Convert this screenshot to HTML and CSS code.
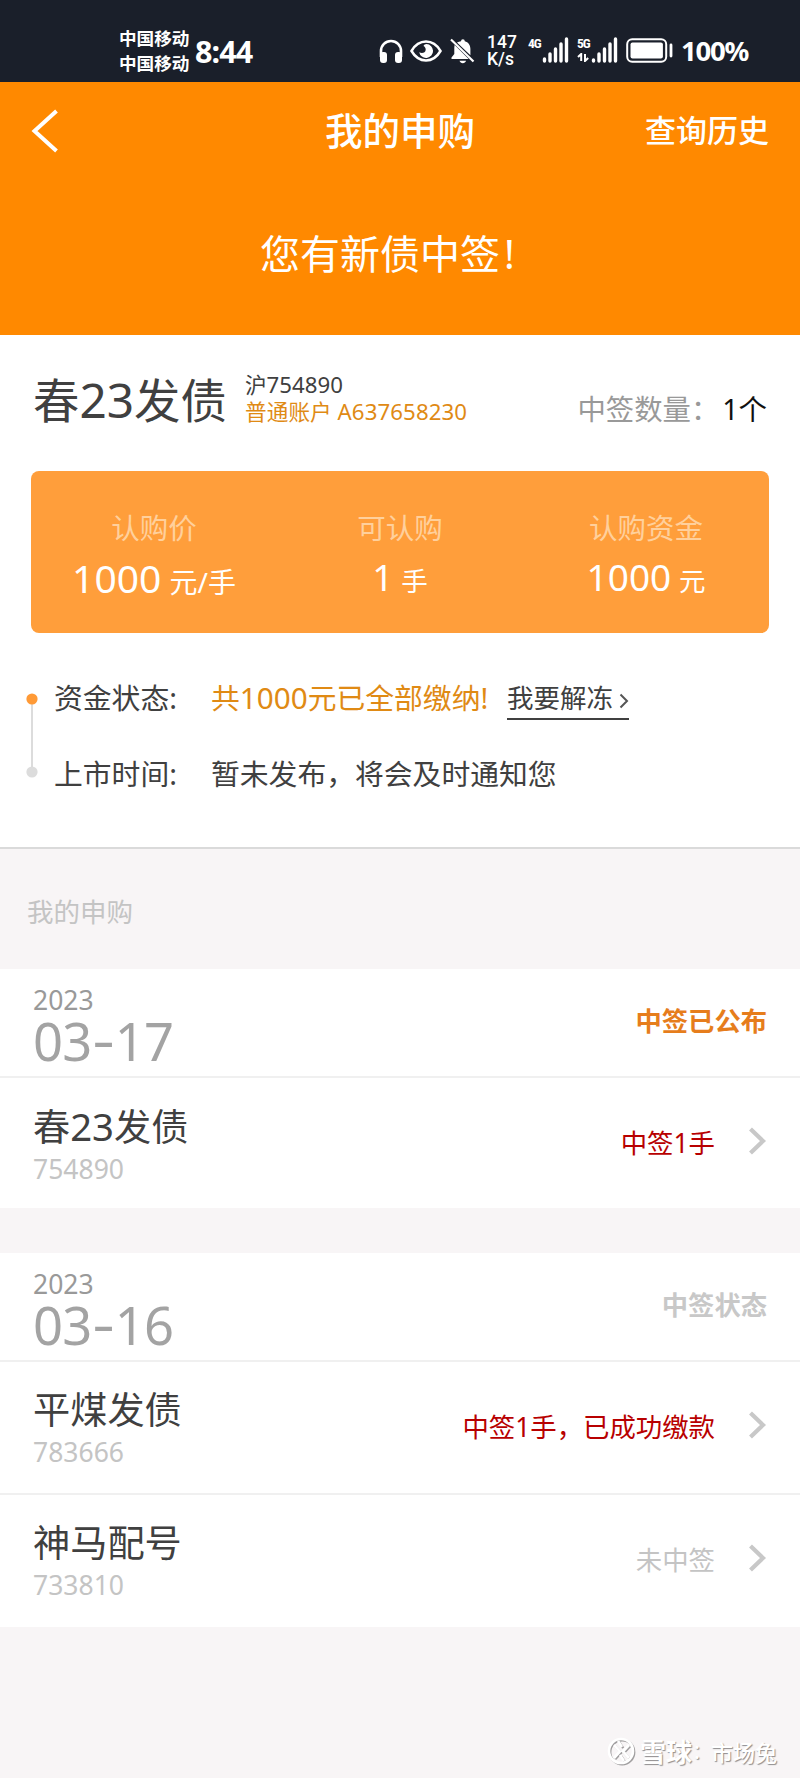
FILE: index.html
```html
<!DOCTYPE html>
<html lang="zh-CN">
<head>
<meta charset="utf-8">
<title>我的申购</title>
<link rel="stylesheet" href="styles.css">
</head>
<body>
<div class="status-bar">
  <div class="carriers"><span>中国移动</span><span>中国移动</span></div>
  <div class="clock">8:44</div>
  <svg class="ic-headphones" width="24" height="25" viewBox="0 0 24 25"><path d="M2 18V12a10 10 0 0 1 20 0v6" fill="none" stroke="#fff" stroke-width="2.6"/><rect x="1" y="13" width="7" height="11" rx="3" fill="#fff"/><rect x="16" y="13" width="7" height="11" rx="3" fill="#fff"/></svg>
  <svg class="ic-eye" width="32" height="22" viewBox="0 0 32 22"><path d="M1.500 11C5 5 10 1.600 16 1.600S27 5 30.500 11C27 17 22 20.400 16 20.400S5 17 1.500 11Z" fill="none" stroke="#fff" stroke-width="2.500"/><path d="M16.500 4a7 7 0 1 1-7.300 8.300c3 1.600 6.300.300 6.500-2.600.100-1.700-.9-2.900-2.200-3.600.4-1.200 1.600-2.100 3-2.100Z" fill="#fff"/></svg>
  <svg class="ic-bell" width="25" height="26" viewBox="0 0 25 26"><path d="M7 4.500C8.300 3.800 9.600 3.400 11 3.200a1.900 1.900 0 0 1 3.800 0c3.500 1 5.600 3.900 5.600 7.500v6.500ZM4.600 7 18.600 21H1.500v-1.500L4.300 16v-5c0-1.500 0-2.800.3-4ZM9.500 22.700h6.600c-.5 1.500-1.700 2.500-3.300 2.500s-2.800-1-3.300-2.500Z" fill="#fff"/><path d="m1 1.500 22.500 22" stroke="#fff" stroke-width="2.200"/></svg>
  <div class="speed"><span>147</span><span>K/s</span></div>
  <div class="signal">
    <span class="net">4G</span>
    <svg width="28" height="26" viewBox="0 0 28 26"><path d="M3.500 22v2M9 17v7M14.500 12v12M20 7v17M25.500 2v22" stroke="#fff" stroke-width="3.400" stroke-linecap="round"/></svg>
  </div>
  <div class="signal">
    <span class="net">5G<svg width="14" height="9" viewBox="0 0 14 9"><path d="M1 4 4.200 1v7M8 1v7l3.200-3" fill="none" stroke="#fff" stroke-width="2"/></svg></span>
    <svg width="28" height="26" viewBox="0 0 28 26"><path d="M3.500 23v1M9 17v7M14.500 12v12M20 7v17M25.500 2v22" stroke="#fff" stroke-width="3.400" stroke-linecap="round"/></svg>
  </div>
  <svg class="ic-battery" width="48" height="25" viewBox="0 0 48 25"><rect x="1.200" y="1.200" width="39" height="22.600" rx="5" fill="none" stroke="#fff" stroke-width="2"/><rect x="4.500" y="4.500" width="32.400" height="16" rx="2" fill="#fff"/><path d="M45 7v11" stroke="#fff" stroke-width="2.800" stroke-linecap="round"/></svg>
  <div class="percent">100%</div>
</div>

<header class="hero">
  <nav class="nav">
    <svg class="back" width="28" height="46" viewBox="0 0 28 46"><path d="M25.500 3 3.500 23l22 20" fill="none" stroke="#fff" stroke-width="4"/></svg>
    <h1 class="nav-title">我的申购</h1>
    <span class="nav-link">查询历史</span>
  </nav>
  <p class="hero-text">您有新债中签<span class="bang">!</span></p>
</header>

<section class="detail">
  <div class="bond">
    <div class="bond-name">春<span class="num">23</span>发债</div>
    <div class="bond-meta">
      <span>沪<span class="num">754890</span></span>
      <span class="account">普通账户 <span class="num">A637658230</span></span>
    </div>
    <div class="bond-count">中签数量：<b>1个</b></div>
  </div>
  <div class="panel">
    <div class="cell"><span class="label">认购价</span><span class="value value-lg">1000 <small>元/手</small></span></div>
    <div class="cell"><span class="label">可认购</span><span class="value">1 <small>手</small></span></div>
    <div class="cell"><span class="label">认购资金</span><span class="value">1000 <small>元</small></span></div>
  </div>
  <div class="timeline">
    <svg class="track" width="12" height="86" viewBox="0 0 12 86"><path d="M6 6v74" stroke="#dcdcdc" stroke-width="2"/><circle cx="6" cy="6" r="5.600" fill="#ff9a36"/><circle cx="6" cy="79" r="5.600" fill="#dcdcdc"/></svg>
    <div class="rows">
      <div class="row"><span class="key">资金状态:</span><span class="paid">共<span class="num">1000</span>元已全部缴纳!</span>
        <span class="unfreeze">我要解冻<svg width="10" height="16" viewBox="0 0 10 16"><path d="m1.500 1.500 6.500 6.500-6.500 6.500" fill="none" stroke="#555" stroke-width="2"/></svg></span></div>
      <div class="row"><span class="key">上市时间:</span><span>暂未发布，将会及时通知您</span></div>
    </div>
  </div>
</section>

<h2 class="section-title">我的申购</h2>

<section class="group">
  <div class="group-head">
    <div><div class="year">2023</div><div class="date">03<i>-</i>17</div></div>
    <span class="state state-on">中签已公布</span>
  </div>
  <div class="item">
    <div><div class="name">春<span class="num">23</span>发债</div><div class="code">754890</div></div>
    <span class="result win">中签1手</span>
    <svg class="arrow" width="19" height="28" viewBox="0 0 19 28"><path d="m2.500 2 12.500 12-12.500 12" fill="none" stroke="#c8c8c8" stroke-width="4.200"/></svg>
  </div>
</section>

<section class="group group-second">
  <div class="group-head">
    <div><div class="year">2023</div><div class="date">03<i>-</i>16</div></div>
    <span class="state">中签状态</span>
  </div>
  <div class="item">
    <div><div class="name">平煤发债</div><div class="code">783666</div></div>
    <span class="result win">中签1手，已成功缴款</span>
    <svg class="arrow" width="19" height="28" viewBox="0 0 19 28"><path d="m2.500 2 12.500 12-12.500 12" fill="none" stroke="#c8c8c8" stroke-width="4.200"/></svg>
  </div>
  <div class="item">
    <div><div class="name">神马配号</div><div class="code">733810</div></div>
    <span class="result">未中签</span>
    <svg class="arrow" width="19" height="28" viewBox="0 0 19 28"><path d="m2.500 2 12.500 12-12.500 12" fill="none" stroke="#c8c8c8" stroke-width="4.200"/></svg>
  </div>
</section>

<footer class="watermark">
  <svg width="30" height="30" viewBox="0 0 30 30" fill="none"><g stroke="#a09e9f" stroke-width="2.400" transform="translate(1.200 1.200)"><circle cx="14" cy="14" r="12"/><path d="m7 8 6 6.500L7 21M11 4l4 6M22 8l-6 6.500 6 6.500M13 18l4 6"/></g><g stroke="#fff" stroke-width="2.600"><circle cx="14" cy="14" r="12"/><path d="m7 8 6 6.500L7 21M11 4l4 6M22 8l-6 6.500 6 6.500M13 18l4 6"/></g></svg>
  <span class="brand">雪球</span><span class="sep">：</span><span class="author">市场兔</span>
</footer>
</body>
</html>
```
FILE: styles.css
```css
* { box-sizing: border-box; }
body {
  margin: 0;
  width: 800px;
  height: 1778px;
  overflow: hidden;
  background: #f8f5f6;
  color: #404040;
  font-family: "Noto Sans", "Noto Sans CJK SC", sans-serif;
  white-space: nowrap;
}
svg { display: block; flex: none; }
h1, h2, p { margin: 0; font-weight: 400; }
.num { font-size: 1.03em; }

/* System status bar */
.status-bar {
  height: 82px;
  display: flex;
  align-items: flex-start;
  padding-left: 119px;
  background: #1a1f2a;
  color: #fff;
}
.carriers { width: 76px; padding-top: 26px; font-size: 17.600px; line-height: 24.500px; font-weight: 700; }
.carriers span { display: block; }
.clock { width: 184px; padding-top: 31px; font-size: 30.500px; line-height: 40px; font-weight: 700; letter-spacing: -.9px; }
.ic-headphones { margin-top: 39px; }
.ic-eye { margin: 40px 0 0 7px; }
.ic-bell { margin: 38px 0 0 8px; }
.speed { width: 41px; margin-left: 12px; padding-top: 34px; font: 500 17.500px/17px Roboto, sans-serif; }
.speed span { display: block; }
.signal { width: 49px; display: flex; padding-top: 37px; }
.net { width: 13px; font: 700 13.500px/13px "Roboto Condensed", Roboto, sans-serif; letter-spacing: -1px; }
.net svg { margin-top: 3px; }
.ic-battery { margin: 38px 0 0 0; }
.percent { margin-left: 7px; padding-top: 31px; font-size: 27.500px; line-height: 40px; font-weight: 700; letter-spacing: -1.200px; }

/* Orange header */
.hero { height: 253px; background: #ff8900; color: #fff; }
.nav {
  height: 98px;
  display: grid;
  grid-template-columns: 1fr auto 1fr;
  align-items: center;
  padding: 0 31px 0 31px;
}
.nav-title { padding-bottom: 5px; font-size: 37.500px; font-weight: 500; }
.nav-link { justify-self: end; padding-bottom: 5px; font-size: 31px; font-weight: 500; }
.hero-text { padding: 44px 0 0 260px; font-size: 40px; line-height: 60px; }
.bang { padding-left: 4px; }

/* Winning bond */
.detail { height: 514px; padding: 36px 31px 0; background: #fff; border-bottom: 2px solid #dadada; }
.bond { height: 100px; display: flex; padding-left: 2px; }
.bond-name { width: 212px; font-size: 46.400px; line-height: 58px; }
.bond-meta { font-size: 21.600px; line-height: 27px; }
.bond-meta > span { display: block; }
.account { color: #e08a14; letter-spacing: .1px; }
.bond-count { margin-left: auto; padding-right: 2px; padding-top: 18px; font-size: 28.400px; line-height: 40px; color: #999; }
.bond-count b { padding-left: 3px; font-weight: 400; color: #111; }
.panel {
  height: 162px;
  display: grid;
  grid-template-columns: repeat(3, 1fr);
  padding-top: 37px;
  border-radius: 8px;
  background: #ff9e3b;
  color: #fff;
  text-align: center;
}
.label { display: block; font-size: 28.500px; line-height: 40px; color: #ffd09c; }
.value { display: block; padding-top: 2px; font-size: 37px; line-height: 54px; word-spacing: -2px; }
.value small { font-size: 26.500px; }
.value-lg { font-size: 39px; padding-top: 3px; }
.value-lg small { font-size: 28px; }
.timeline { display: flex; margin-left: -5px; padding-top: 45px; }
.track { margin-top: 15px; }
.rows { padding-left: 16px; font-size: 28.800px; line-height: 40px; }
.row { height: 76px; display: flex; }
.key { width: 157px; }
.paid { width: 296px; color: #e08a14; }
.unfreeze {
  height: 42px;
  display: flex;
  align-items: center;
  gap: 6px;
  border-bottom: 2px solid #404040;
  font-size: 26.500px;
}
.unfreeze svg { margin-top: 6px; }

/* Subscription list */
.section-title { height: 120px; padding: 43px 0 0 27px; font-size: 26.500px; line-height: 40px; color: #c4c4c4; }
.group { background: #fff; }
.group-second { margin-top: 45px; }
.group-head { height: 109px; display: flex; padding: 15px 33px 0 33px; border-bottom: 2px solid #f0f0f0; }
.year { font-size: 26.500px; line-height: 32px; color: #999; }
.date { font-size: 52.500px; line-height: 50px; color: #a3a3a3; letter-spacing: -.8px; }
.date i { font-family: Inter, sans-serif; font-style: normal; }
.state { margin-left: auto; padding-top: 17px; font-size: 26.300px; line-height: 40px; font-weight: 700; color: #c8c8c8; }
.state-on { color: #e67d1c; }
.item { height: 133px; display: flex; padding: 23px 33px 0 33px; border-bottom: 2px solid #f0f0f0; }
.item:last-child { height: 132px; border-bottom: 0; }
.group:not(.group-second) .item { height: 130px; }
.name { font-size: 37.200px; line-height: 50px; }
.code { font-size: 26.500px; line-height: 34px; color: #c4c4c4; }
.result { margin-left: auto; padding-top: 22px; font-size: 26.400px; line-height: 40px; color: #c4c4c4; }
.win { color: #b80000; }
.arrow { margin: 26px 0 0 33px; }

.watermark { display: flex; align-items: center; padding: 110px 0 0 607px; color: #fff; font-size: 26px; line-height: 30px; text-shadow: 1px 1px 1px #8f8d8e; }
.brand { padding-left: 3px; font-weight: 700; }
.sep { width: 19px; font-size: 20px; }
.author { font-size: 22px; font-weight: 500; }
```
